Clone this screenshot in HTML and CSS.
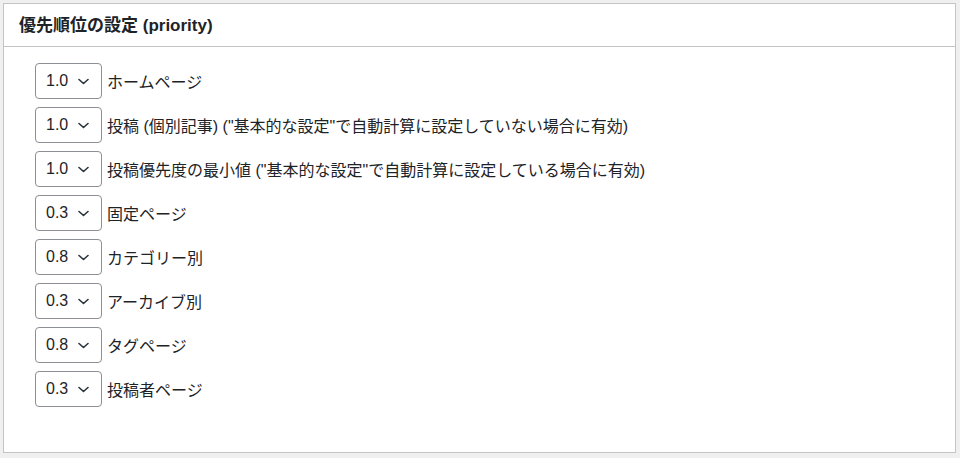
FILE: index.html
```html
<!DOCTYPE html>
<html lang="ja">
<head>
    <meta charset="UTF-8">
    <meta name="viewport" content="width=device-width, initial-scale=1.0">
    <title>優先順位の設定</title>
    <link rel="stylesheet" href="styles.css">
</head>
<body>
    <div class="postbox">
        <div class="postbox-header">
            <h2>優先順位の設定 (priority)</h2>
        </div>
        <ul class="priority-list">
            <li>
                <span class="select">1.0<svg width="11" height="7" viewBox="0 0 11 7"><polyline points="1,1.5 5.5,5.5 10,1.5"/></svg></span>
                <label>ホームページ</label>
            </li>
            <li>
                <span class="select">1.0<svg width="11" height="7" viewBox="0 0 11 7"><polyline points="1,1.5 5.5,5.5 10,1.5"/></svg></span>
                <label>投稿 (個別記事) ("基本的な設定"で自動計算に設定していない場合に有効)</label>
            </li>
            <li>
                <span class="select">1.0<svg width="11" height="7" viewBox="0 0 11 7"><polyline points="1,1.5 5.5,5.5 10,1.5"/></svg></span>
                <label>投稿優先度の最小値 ("基本的な設定"で自動計算に設定している場合に有効)</label>
            </li>
            <li>
                <span class="select">0.3<svg width="11" height="7" viewBox="0 0 11 7"><polyline points="1,1.5 5.5,5.5 10,1.5"/></svg></span>
                <label>固定ページ</label>
            </li>
            <li>
                <span class="select">0.8<svg width="11" height="7" viewBox="0 0 11 7"><polyline points="1,1.5 5.5,5.5 10,1.5"/></svg></span>
                <label>カテゴリー別</label>
            </li>
            <li>
                <span class="select">0.3<svg width="11" height="7" viewBox="0 0 11 7"><polyline points="1,1.5 5.5,5.5 10,1.5"/></svg></span>
                <label>アーカイブ別</label>
            </li>
            <li>
                <span class="select">0.8<svg width="11" height="7" viewBox="0 0 11 7"><polyline points="1,1.5 5.5,5.5 10,1.5"/></svg></span>
                <label>タグページ</label>
            </li>
            <li>
                <span class="select">0.3<svg width="11" height="7" viewBox="0 0 11 7"><polyline points="1,1.5 5.5,5.5 10,1.5"/></svg></span>
                <label>投稿者ページ</label>
            </li>
        </ul>
    </div>
</body>
</html>
```

FILE: styles.css
```css
body {
    margin: 0;
    padding: 3px 4px 5px 3px;
    background-color: #f0f0f1;
    font-family: 'Liberation Sans', 'Noto Sans CJK JP', sans-serif;
    color: #1d2327;
}

.postbox {
    background-color: #fff;
    border: 1px solid #c3c4c7;
    height: 448px;
}

.postbox-header {
    height: 42px;
    border-bottom: 1px solid #c3c4c7;
    display: flex;
    align-items: center;
    padding: 0 15px;
}

.postbox-header h2 {
    margin: 0;
    font-size: 17px;
    font-weight: bold;
    line-height: 1;
}

.priority-list {
    list-style: none;
    margin: 0;
    padding: 16px 0 0 31px;
    display: flex;
    flex-direction: column;
    gap: 8px;
}

.priority-list li {
    display: flex;
    align-items: center;
    height: 36px;
}

.select {
    box-sizing: border-box;
    width: 67px;
    height: 36px;
    border: 1px solid #8c8f94;
    border-radius: 4px;
    display: flex;
    align-items: center;
    justify-content: space-between;
    padding: 0 12px 0 10px;
    font-size: 16px;
}

.select svg {
    fill: none;
    stroke: #2c3338;
    stroke-width: 1.6;
    stroke-linecap: round;
    stroke-linejoin: round;
}

label {
    margin-left: 5px;
    font-size: 16px;
}
```
